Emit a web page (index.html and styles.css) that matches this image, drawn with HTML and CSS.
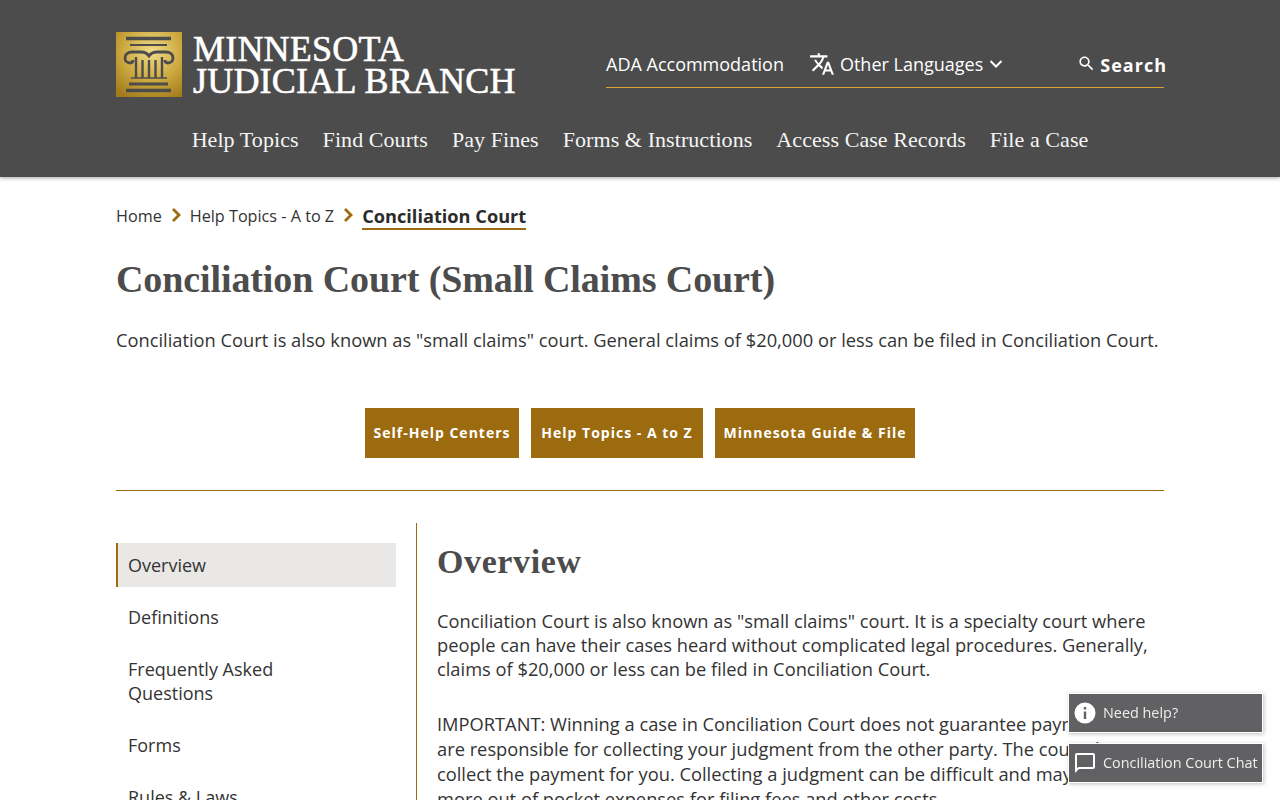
FILE: index.html
```html
<!DOCTYPE html>
<html>
<head>
  <title>Conciliation Court (Small Claims Court)</title>
  <link rel="stylesheet" href="styles.css">
</head>
<body>
  <header class="site-header">
    <div class="header-top">
      <a class="logo" href="#">
        <svg class="logo-mark" width="66" height="65" viewBox="0 0 66 65">
          <defs>
            <radialGradient id="gold" cx="0.55" cy="0.3" r="0.8">
              <stop offset="0" stop-color="#efdc8a"/>
              <stop offset="0.55" stop-color="#cda93f"/>
              <stop offset="1" stop-color="#a27c1b"/>
            </radialGradient>
          </defs>
          <rect width="66" height="65" fill="url(#gold)"/>
          <g fill="none" stroke="#4c4c4c">
            <path d="M10 6.500H55" stroke-width="3.500"/>
            <path d="M14 13H51" stroke-width="2"/>
            <path d="M14 31c-3 0-5-2-5-5 0-4 3-6 7-6h9c4 0 6 1 8 4 2-3 4-4 8-4h9c4 0 7 2 7 6 0 3-2 5-5 5-2 0-3-1-3-3" stroke-width="2.800"/>
            <path d="M14 31c2 0 3-1 3-3" stroke-width="2.800"/>
            <path d="M20 25V46M26.500 28V46M33 28V46M39.500 28V46M46 25V46" stroke-width="2.400"/>
            <path d="M15 46H51" stroke-width="1.600"/>
            <path d="M13 52H52" stroke-width="3"/>
            <path d="M10 58.500H55" stroke-width="3.500"/>
          </g>
        </svg>
        <span class="logo-text">MINNESOTA<br>JUDICIAL BRANCH</span>
      </a>
      <nav class="util-nav">
        <a href="#">ADA Accommodation</a>
        <a class="lang" href="#">
          <svg width="26" height="26" viewBox="0 0 24 24" fill="#fff"><path d="M12.870 15.070l-2.540-2.510.030-.030c1.740-1.940 2.980-4.170 3.710-6.530H17V4h-7V2H8v2H1v1.990h11.170C11.500 7.920 10.440 9.750 9 11.350 8.070 10.320 7.300 9.190 6.690 8h-2c.73 1.630 1.730 3.170 2.980 4.560l-5.090 5.020L4 19l5-5 3.110 3.110.760-2.040zM18.500 10h-2L12 22h2l1.120-3h4.750L21 22h2l-4.500-12zm-2.620 7l1.620-4.330L19.120 17h-3.240z"/></svg>
          <span>Other Languages</span>
          <svg width="16" height="16" viewBox="0 0 16 16" fill="none" stroke="#fff" stroke-width="2"><path d="M2.500 5l5.500 5.500L13.500 5"/></svg>
        </a>
        <a class="search" href="#">
          <svg width="19" height="19" viewBox="0 0 24 24" fill="#fff"><path d="M15.500 14h-.790l-.280-.270C15.410 12.590 16 11.110 16 9.500 16 5.910 13.090 3 9.500 3S3 5.910 3 9.500 5.910 16 9.500 16c1.610 0 3.090-.590 4.230-1.570l.270.280v.790l5 4.990L20.490 19l-4.990-5zm-6 0C7.010 14 5 11.990 5 9.500S7.010 5 9.500 5 14 7.010 14 9.500 11.990 14 9.500 14z"/></svg>
          <span>Search</span>
        </a>
      </nav>
    </div>
    <nav class="main-nav">
      <a href="#">Help Topics</a>
      <a href="#">Find Courts</a>
      <a href="#">Pay Fines</a>
      <a href="#">Forms &amp; Instructions</a>
      <a href="#">Access Case Records</a>
      <a href="#">File a Case</a>
    </nav>
  </header>

  <main class="page">
    <div class="breadcrumb">
      <a href="#">Home</a>
      <svg class="crumb-arrow" width="10" height="14" viewBox="0 0 10 14" fill="none" stroke="#9c6b10" stroke-width="2.800"><path d="M2 1L8 7 2 13"/></svg>
      <a href="#">Help Topics - A to Z</a>
      <svg class="crumb-arrow" width="10" height="14" viewBox="0 0 10 14" fill="none" stroke="#9c6b10" stroke-width="2.800"><path d="M2 1L8 7 2 13"/></svg>
      <span class="current">Conciliation Court</span>
    </div>

    <h1>Conciliation Court (Small Claims Court)</h1>
    <p class="lead">Conciliation Court is also known as "small claims" court. General claims of $20,000 or less can be filed in Conciliation Court.</p>

    <div class="cta-row">
      <a class="cta" href="#">Self-Help Centers</a>
      <a class="cta" href="#">Help Topics - A to Z</a>
      <a class="cta" href="#">Minnesota Guide &amp; File</a>
    </div>

    <div class="columns">
      <ul class="side-nav">
        <li class="active"><a href="#">Overview</a></li>
        <li><a href="#">Definitions</a></li>
        <li><a href="#">Frequently Asked<br>Questions</a></li>
        <li><a href="#">Forms</a></li>
        <li><a href="#">Rules &amp; Laws</a></li>
      </ul>
      <section class="content">
        <h2>Overview</h2>
        <p>Conciliation Court is also known as "small claims" court. It is a specialty court where people can have their cases heard without complicated legal procedures. Generally, claims of $20,000 or less can be filed in Conciliation Court.</p>
        <p class="important">IMPORTANT: Winning a case in Conciliation Court does not guarantee payment. You<br>are responsible for collecting your judgment from the other party. The court does not<br>collect the payment for you. Collecting a judgment can be difficult and may result in<br>more out of pocket expenses for filing fees and other costs.</p>
      </section>
    </div>
  </main>

  <div class="help-box">
    <a class="help-btn" href="#">
      <svg width="24" height="24" viewBox="0 0 24 24" fill="#fff"><path fill-rule="evenodd" d="M12 1.500a10.500 10.500 0 1 0 0 21 10.500 10.500 0 0 0 0-21zM10.800 6h2.400v2.600h-2.400zM10.800 10.500h2.400V18h-2.400z"/></svg>
      <span>Need help?</span>
    </a>
    <a class="help-btn" href="#">
      <svg width="24" height="24" viewBox="0 0 24 24" fill="#fff"><path d="M20 2H4c-1.100 0-2 .9-2 2v18l4-4h14c1.100 0 2-.9 2-2V4c0-1.100-.9-2-2-2zm0 14H5.200L4 17.200V4h16v12z"/></svg>
      <span>Conciliation Court Chat</span>
    </a>
  </div>
</body>
</html>
```

FILE: styles.css
```css
html, body {
  height: 100%;
}

body {
  margin: 0;
  overflow: hidden;
  background-color: #fff;
  color: #333;
  font-family: "Open Sans", Arial, sans-serif;
  font-size: 18px;
  line-height: 24px;
}

a {
  color: inherit;
  text-decoration: none;
}

/* Header */
.site-header {
  height: 177px;
  box-sizing: border-box;
  padding: 32px 116px 0;
  background-color: #4c4c4c;
  color: #fff;
  box-shadow: 0 1px 4px rgba(0, 0, 0, 0.35);
}

.header-top {
  display: flex;
  justify-content: space-between;
  height: 65px;
}

.logo {
  display: flex;
  align-items: center;
}

.logo-mark {
  display: block;
  margin-right: 11px;
}

.logo-text {
  font-family: "Liberation Serif", "Times New Roman", serif;
  font-size: 36px;
  line-height: 32px;
  font-weight: 400;
  letter-spacing: 0.2px;
  -webkit-text-stroke: 0.6px #fff;
}

.util-nav {
  display: flex;
  align-items: center;
  box-sizing: border-box;
  width: 558px;
  height: 56px;
  padding-top: 8px;
  border-bottom: 1px solid #e0a030;
}

.lang {
  display: flex;
  align-items: center;
  margin-left: 25px;
}

.lang span {
  margin: 0 5px 0 5px;
}

.search {
  display: flex;
  align-items: center;
  margin-left: auto;
  margin-right: -3px;
  font-weight: 700;
  letter-spacing: 1px;
}

.search span {
  margin-left: 4px;
  padding-top: 2px;
}

.main-nav {
  display: flex;
  justify-content: center;
  gap: 24px;
  margin-top: 29px;
  font-family: "Liberation Serif", "Times New Roman", serif;
  font-size: 22px;
  line-height: 28px;
  letter-spacing: 0.07px;
  color: #f5f5f5;
}

/* Page */
.page {
  padding: 27px 116px 0;
}

.breadcrumb {
  display: flex;
  align-items: flex-start;
  font-size: 16.2px;
  line-height: 24px;
}

.crumb-arrow {
  margin: 4px 9px 0 9px;
}

.current {
  font-size: 18.2px;
  font-weight: 700;
  line-height: 24px;
  color: #2b2b2b;
  border-bottom: 2px solid #9c6b10;
}

h1 {
  margin: 27px 0 0;
  font-family: "Liberation Serif", "Times New Roman", serif;
  font-size: 38px;
  line-height: 44px;
  font-weight: 700;
  letter-spacing: -0.1px;
  color: #4c4c4c;
}

.lead {
  margin: 27px 0 0;
  font-size: 18.3px;
}

.cta-row {
  display: grid;
  grid-template-columns: 154px 172px 200px;
  justify-content: center;
  gap: 12px;
  margin-top: 56px;
  padding-bottom: 32px;
  border-bottom: 1px solid #9c6b10;
}

.cta {
  background-color: #9c6b10;
  color: #fff;
  font-size: 14px;
  line-height: 50px;
  font-weight: 700;
  letter-spacing: 1px;
  text-align: center;
}

.columns {
  display: flex;
  margin-top: 32px;
}

.side-nav {
  flex: none;
  width: 280px;
  margin: 0;
  padding: 20px 20px 0 0;
  list-style: none;
  border-right: 1px solid #9c6b10;
}

.side-nav li {
  margin-bottom: 8px;
  padding: 10px 12px;
}

.side-nav .active {
  padding-left: 10px;
  border-left: 2px solid #9c6b10;
  background-color: #e9e8e6;
}

.content {
  padding-left: 20px;
}

h2 {
  margin: 20px 0 0;
  font-family: "Liberation Serif", "Times New Roman", serif;
  font-size: 34px;
  line-height: 38px;
  font-weight: 700;
  letter-spacing: 0.6px;
  color: #4c4c4c;
}

.content p {
  margin: 28px 0 0;
  font-size: 18.3px;
}

.content .important {
  margin-top: 30px;
  line-height: 25px;
}

/* Floating help buttons */
.help-box {
  position: fixed;
  right: 18px;
  bottom: 18px;
  width: 193px;
}

.help-btn {
  display: flex;
  align-items: center;
  height: 38px;
  margin-top: 12px;
  padding-left: 4px;
  background-color: #616062;
  color: #eee;
  font-size: 14.4px;
  box-shadow: 0 0 0 1px #fff, 1px 1px 4px 1px rgba(0, 0, 0, 0.25);
  white-space: nowrap;
}

.help-btn span {
  margin-left: 6px;
}
```
